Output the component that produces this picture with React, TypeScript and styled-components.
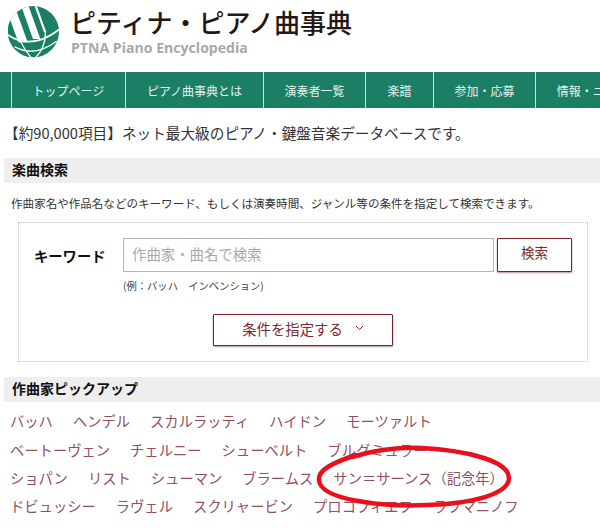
import React from "react";
import styled, { createGlobalStyle } from "styled-components";

const GlobalStyle = createGlobalStyle`
  html, body {
    margin: 0;
    padding: 0;
    background: #fff;
    overflow: hidden;
  }
  body {
    font-family: "Noto Sans CJK JP", "Noto Sans", sans-serif;
    color: #333;
  }
`;

const Page = styled.div`
  position: relative;
  width: 600px;
  height: 530px;
  overflow: hidden;
`;

const Header = styled.header`
  height: 72px;
  display: flex;
  align-items: flex-start;
  gap: 10px;
  padding: 5px 0 0 8px;
  box-sizing: border-box;
`;

const TitleBlock = styled.div`
  display: flex;
  flex-direction: column;
`;

const SiteTitle = styled.h1`
  margin: 0;
  font-size: 26px;
  line-height: 34px;
  font-weight: 500;
  color: #231815;
  white-space: nowrap;
`;

const SiteSubtitle = styled.div`
  font-family: "Open Sans", "Noto Sans", sans-serif;
  font-size: 14.1px;
  line-height: 16px;
  margin: 1px 0 0 1px;
  font-weight: 700;
  color: #a9a9a9;
  white-space: nowrap;
`;

const Nav = styled.nav`
  display: flex;
  height: 36px;
  background: #1a7f64;
  overflow: hidden;
  padding-left: 11px;
`;

const NavItem = styled.a<{ $width: number }>`
  flex: none;
  width: ${(p) => p.$width}px;
  box-sizing: border-box;
  border-left: 1.5px solid #c9e0d9;
  display: flex;
  align-items: center;
  justify-content: center;
  white-space: nowrap;
  font-size: 12px;
  color: #e6f2ee;
`;

const Intro = styled.p`
  margin: 0;
  padding: 14px 0 0 4px;
  font-size: 14.65px;
  line-height: 21px;
  color: #333;
  white-space: nowrap;
  height: 50px;
  box-sizing: border-box;
`;

const SectionHeading = styled.h2`
  margin: 0 0 0 4px;
  height: 25px;
  padding-left: 8px;
  background: #eee;
  font-size: 14px;
  line-height: 23px;
  font-weight: 700;
  color: #111;
`;

const Description = styled.p`
  margin: 0;
  padding: 12px 0 0 11px;
  height: 39px;
  box-sizing: border-box;
  font-size: 11.55px;
  line-height: 17px;
  color: #333;
  white-space: nowrap;
`;

const SearchBox = styled.div`
  margin-left: 18px;
  width: 570px;
  height: 140px;
  box-sizing: border-box;
  border: 1px dotted #c4c4c4;
  padding: 15px 15px 0 15px;
  display: flex;
  flex-direction: column;
`;

const KeywordRow = styled.div`
  display: flex;
  align-items: center;
  height: 34px;
`;

const KeywordLabel = styled.label`
  width: 89px;
  flex: none;
  font-size: 14.3px;
  font-weight: 700;
  color: #111;
`;

const KeywordInput = styled.div`
  width: 371px;
  height: 34px;
  flex: none;
  box-sizing: border-box;
  border: 1px solid #b5b5b5;
  padding-left: 8px;
  font-size: 14.4px;
  line-height: 30px;
  color: #a8a8a8;
`;

const OutlineButton = styled.button<{ $width: number; $height: number; $size: number }>`
  width: ${(p) => p.$width}px;
  height: ${(p) => p.$height}px;
  font-size: ${(p) => p.$size}px;
  flex: none;
  box-sizing: border-box;
  background: #fff;
  border: 1px solid #7d1f27;
  border-radius: 1px;
  box-shadow: 0 1px 2px rgba(90, 20, 25, 0.45);
  color: #7d2a2f;
  font-family: inherit;
  padding: 0;
`;

const SearchButton = styled(OutlineButton)`
  margin-left: 3px;
  padding-bottom: 6px;
`;

const Hint = styled.div`
  margin: 6px 0 0 89px;
  font-size: 10.3px;
  line-height: 16px;
  color: #444;
`;

const ConditionRow = styled.div`
  display: flex;
  justify-content: center;
  margin: 20px 0 0 0;
`;

const ConditionButton = styled(OutlineButton)`
  display: flex;
  align-items: center;
  justify-content: center;
  gap: 12px;
  padding-bottom: 4px;
`;

const ConditionLabel = styled.span`
  font-size: 14.4px;
`;

const PickupHeading = styled(SectionHeading)`
  margin-top: 15px;
`;

const LinkList = styled.div`
  padding: 5px 0 0 10px;
  display: flex;
  flex-direction: column;
`;

const LinkRow = styled.div`
  display: flex;
  height: 28.4px;
  align-items: center;
  gap: 20px;
  white-space: nowrap;
`;

const ComposerLink = styled.a`
  font-size: 14.3px;
  line-height: 24px;
  color: #93505f;
`;

const Marker = styled.svg`
  position: absolute;
  left: 312px;
  top: 442px;
  pointer-events: none;
`;

const Logo = () => (
  <svg width="52" height="54" viewBox="22 13 156 162" style={{ flex: "none" }}>
    <defs>
      <clipPath id="globe">
        <circle cx="98" cy="93" r="77" />
      </clipPath>
    </defs>
    <g clipPath="url(#globe)">
      <rect x="0" y="0" width="210" height="210" fill="#1a7f64" />
      <g fill="#fff">
        <polygon points="8,0 36,0 81,125 53,125" />
        <polygon points="56,0 78,0 119,115 97,115" />
        <polygon points="96,0 103,0 137,95 130,95" />
      </g>
      <g fill="none" stroke="#fff">
        <path d="M15 98 Q90 155 180 83" strokeWidth="5" />
        <path d="M42 138 Q100 172 168 122" strokeWidth="4" />
        <path d="M60 122 Q72 150 96 176" strokeWidth="4" />
        <path d="M134 95 Q136 140 100 176" strokeWidth="4" />
      </g>
    </g>
  </svg>
);

const rows = [
  ["バッハ", "ヘンデル", "スカルラッティ", "ハイドン", "モーツァルト"],
  ["ベートーヴェン", "チェルニー", "シューベルト", "ブルグミュラー"],
  ["ショパン", "リスト", "シューマン", "ブラームス", "サン＝サーンス（記念年）"],
  ["ドビュッシー", "ラヴェル", "スクリャービン", "プロコフィエフ", "ラフマニノフ"],
];

const navItems: [string, number][] = [
  ["トップページ", 114],
  ["ピアノ曲事典とは", 138],
  ["演奏者一覧", 102],
  ["楽譜", 68],
  ["参加・応募", 102],
  ["情報・ニュース", 126],
];

export default function App() {
  return (
    <Page>
      <GlobalStyle />
      <Header>
        <Logo />
        <TitleBlock>
          <SiteTitle>ピティナ・ピアノ曲事典</SiteTitle>
          <SiteSubtitle>PTNA Piano Encyclopedia</SiteSubtitle>
        </TitleBlock>
      </Header>
      <Nav>
        {navItems.map(([label, width]) => (
          <NavItem key={label} $width={width}>
            {label}
          </NavItem>
        ))}
      </Nav>
      <Intro>【約90,000項目】ネット最大級のピアノ・鍵盤音楽データベースです。</Intro>
      <SectionHeading>楽曲検索</SectionHeading>
      <Description>
        作曲家名や作品名などのキーワード、もしくは演奏時間、ジャンル等の条件を指定して検索できます。
      </Description>
      <SearchBox>
        <KeywordRow>
          <KeywordLabel>キーワード</KeywordLabel>
          <KeywordInput>作曲家・曲名で検索</KeywordInput>
          <SearchButton $width={75} $height={34} $size={13.5}>
            検索
          </SearchButton>
        </KeywordRow>
        <Hint>(例：バッハ　インベンション)</Hint>
        <ConditionRow>
          <ConditionButton $width={180} $height={32} $size={14}>
            <ConditionLabel>条件を指定する</ConditionLabel>
            <svg width="9" height="6" viewBox="0 0 9 6">
              <path d="M1 1 L4.5 4.5 L8 1" fill="none" stroke="#7d2a2f" strokeWidth="1" />
            </svg>
          </ConditionButton>
        </ConditionRow>
      </SearchBox>
      <PickupHeading>作曲家ピックアップ</PickupHeading>
      <LinkList>
        {rows.map((row) => (
          <LinkRow key={row[0]}>
            {row.map((name) => (
              <ComposerLink key={name}>{name}</ComposerLink>
            ))}
          </LinkRow>
        ))}
      </LinkList>
      <Marker width="206" height="72" viewBox="0 0 206 72">
        <path
          d="M40 15 C60 9 85 5 110 6 C150 8 197 18 197 36 C197 52 160 62 115 63 C70 65 8 58 7 38 C6 28 20 21 44 13"
          fill="none"
          stroke="#e8101c"
          strokeWidth="4.5"
          strokeLinecap="round"
        />
      </Marker>
    </Page>
  );
}
